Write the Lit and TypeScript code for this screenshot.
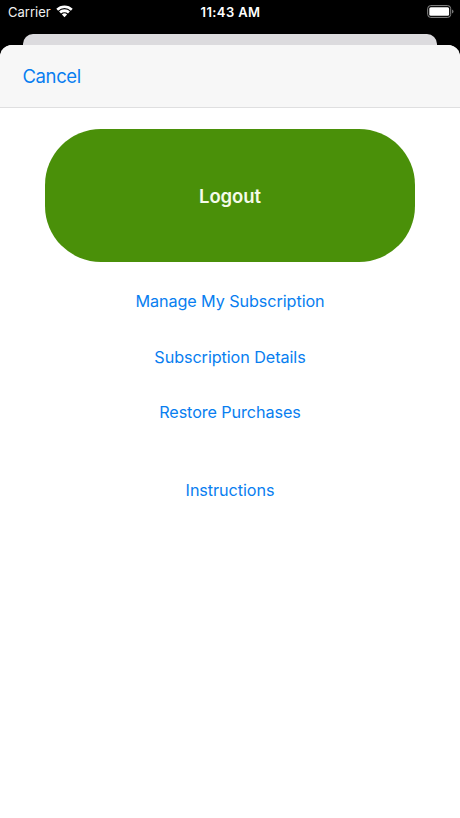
import { LitElement, html, css } from "lit";
import { customElement } from "lit/decorators.js";

@customElement("app-root")
export class AppRoot extends LitElement {
  static styles = css`
    :host {
      display: flex;
      flex-direction: column;
      width: 460px;
      height: 818px;
      overflow: hidden;
      background: #000;
      font-family: Inter, "Liberation Sans", sans-serif;
    }
    button {
      border: 0;
      margin: 0;
      padding: 0;
      background: none;
      font-family: inherit;
      color: #087ef0;
      white-space: nowrap;
    }
    .status {
      display: grid;
      grid-template-columns: 1fr auto 1fr;
      align-items: center;
      box-sizing: border-box;
      height: 34px;
      padding: 0 6px 10px 8px;
      color: #fff;
      font-size: 13px;
      line-height: 24px;
    }
    .carrier {
      display: flex;
      align-items: center;
      gap: 5px;
      letter-spacing: 0;
      color: #f0f0f0;
    }
    .time {
      font-weight: 600;
      letter-spacing: 0.4px;
      margin-right: 1px;
    }
    .battery {
      justify-self: end;
    }
    svg {
      display: block;
      margin-top: -1px;
    }
    .behind {
      flex: none;
      height: 11px;
      margin: 0 23px;
      border-radius: 10px 10px 0 0;
      background: #dcdbde;
    }
    .sheet {
      flex: 1;
      display: flex;
      flex-direction: column;
      overflow: hidden;
      border-radius: 12px 12px 0 0;
      background: #fff;
    }
    .nav {
      display: flex;
      align-items: center;
      box-sizing: border-box;
      height: 63px;
      padding: 0 0 0 22.5px;
      border-bottom: 1px solid #dfdfe0;
      background: #f7f7f7;
    }
    .cancel {
      font-size: 18.5px;
      line-height: 24px;
      letter-spacing: -0.4px;
    }
    .content {
      display: flex;
      flex-direction: column;
      align-items: center;
      padding-top: 21px;
    }
    .logout {
      width: 370.5px;
      height: 133.4px;
      border-radius: 56px;
      background: #4a9009;
      color: #f4fbe9;
      font-size: 18.5px;
      font-weight: 600;
      letter-spacing: -0.1px;
    }
    .links {
      display: flex;
      flex-direction: column;
      align-items: center;
      gap: 31.5px;
      padding-top: 27px;
    }
    .link {
      font-size: 16.2px;
      line-height: 24px;
      letter-spacing: -0.08px;
    }
    .spaced {
      margin-top: 22.5px;
    }
  `;

  render() {
    return html`
      <header class="status">
        <div class="carrier">
          <span>Carrier</span>
          <svg width="17" height="13" viewBox="0 0 17 13" fill="#fff">
            <path d="M8.5 0.4C5.3 0.4 2.4 1.6 0.3 3.7L2.1 5.7A9.2 9.2 0 0 1 14.9 5.7L16.7 3.7C14.6 1.6 11.7 0.4 8.5 0.4Z" />
            <path d="M8.5 4.3C6.4 4.3 4.5 5.1 3.1 6.5L5 8.6A5.1 5.1 0 0 1 12 8.6L13.9 6.5C12.5 5.1 10.6 4.3 8.5 4.3Z" />
            <path d="M8.5 8.2C7.5 8.2 6.6 8.6 5.9 9.4L8.5 12.3L11.1 9.4C10.4 8.6 9.5 8.2 8.5 8.2Z" />
          </svg>
        </div>
        <span class="time">11:43 AM</span>
        <svg class="battery" width="27" height="13" viewBox="0 0 27 13">
          <rect x="0.7" y="0.6" width="23" height="11.8" rx="3" fill="none" stroke="#8b8b8b" />
          <rect x="2.3" y="2.2" width="19.8" height="8.6" rx="1.5" fill="#fff" />
          <path d="M25 4.6Q26.5 5 26.5 6.5T25 8.4Z" fill="#777" />
        </svg>
      </header>
      <div class="behind"></div>
      <main class="sheet">
        <nav class="nav"><button class="cancel">Cancel</button></nav>
        <section class="content">
          <button class="logout">Logout</button>
          <div class="links">
            <button class="link">Manage My Subscription</button>
            <button class="link">Subscription Details</button>
            <button class="link">Restore Purchases</button>
            <button class="link spaced">Instructions</button>
          </div>
        </section>
      </main>
    `;
  }
}
